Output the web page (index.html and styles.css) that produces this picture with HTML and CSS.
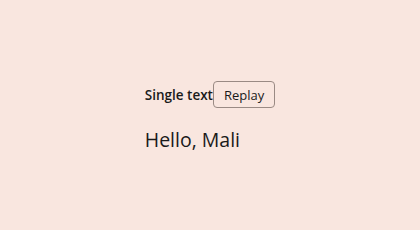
FILE: index.html
```html
<!DOCTYPE html>
<html>
<head>
    <meta charset="UTF-8">
    <title>Single text</title>
    <link rel="stylesheet" href="styles.css">
</head>
<body>
    <div class="stage">
        <div class="demo">
            <div class="toolbar">
                <span class="label">Single text</span>
                <button class="replay">Replay</button>
            </div>
            <div class="greeting">Hello, Mali</div>
        </div>
    </div>
</body>
</html>
```
FILE: styles.css
```css
html, body { margin: 0; height: 100%; }
body { background: #f9e6df; font-family: "Open Sans", "Noto Sans", sans-serif; color: #1a1a1a; }
.stage { height: 100%; display: flex; align-items: center; justify-content: center; padding-top: 4px; box-sizing: border-box; }
.demo { display: flex; flex-direction: column; gap: 18px; }
.toolbar { display: flex; align-items: center; }
.label { font-size: 13.5px; font-weight: 600; }
.replay {
    font-family: inherit;
    font-size: 13px;
    padding: 4px 10px;
    height: 27px;
    background: transparent;
    border: 1px solid #9a8a84;
    border-radius: 4px;
    color: #1a1a1a;
}
.greeting { font-size: 19.5px; }
```
